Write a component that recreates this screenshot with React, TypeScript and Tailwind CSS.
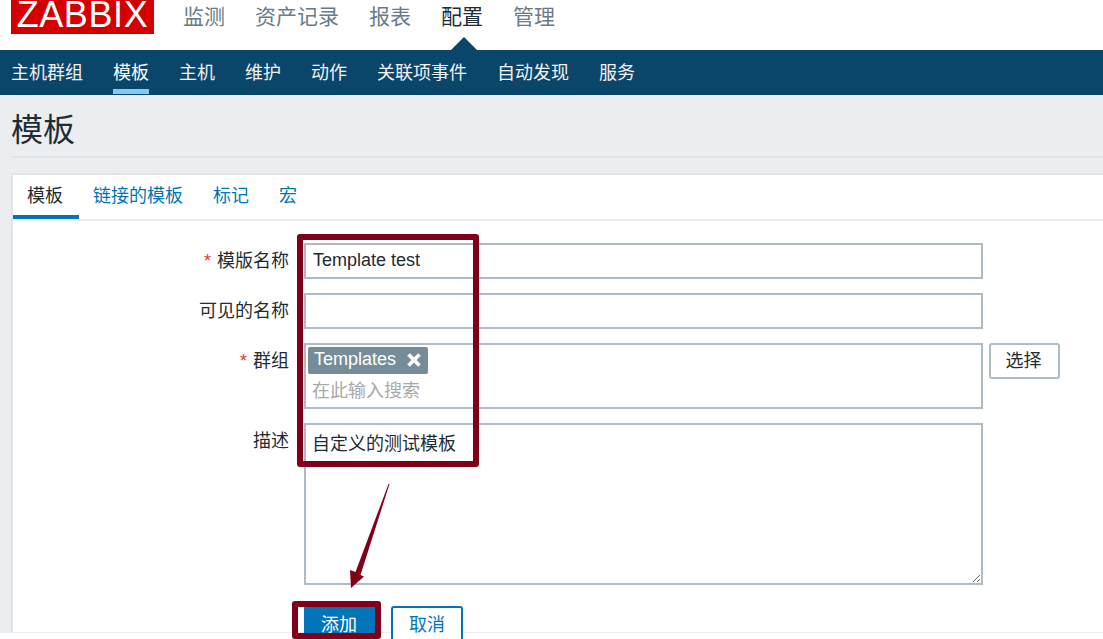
import React from 'react'

const FONT = "font-['Liberation_Sans','Noto_Sans_CJK_SC',sans-serif]"

const topMenu = ['监测', '资产记录', '报表', '配置', '管理']
const subMenu = ['主机群组', '模板', '主机', '维护', '动作', '关联项事件', '自动发现', '服务']
const tabs = ['模板', '链接的模板', '标记', '宏']

const Label: React.FC<{ text: string; required?: boolean }> = ({ text, required }) => (
    <div className="w-[276px] shrink-0 text-right text-[18px] leading-[24px] text-[#1f2c33] pt-[6px]">
        {required && <span className="text-[#e33734] mr-[6px]">*</span>}
        {text}
    </div>
)

const App: React.FC = () => {
    return (
        <div className={`${FONT} relative w-[1103px] h-[639px] overflow-hidden bg-white`}>
            {/* top bar */}
            <div className="h-[50px] flex items-start pl-[11px]">
                <div className="w-[143px] h-[34px] bg-[#d40000] flex justify-center items-center pb-[4px]">
                    <span className="text-white text-[36px] leading-[30px] tracking-[0.6px]">ZABBIX</span>
                </div>
                <div className="flex gap-[30px] ml-[29px] pt-[3px]">
                    {topMenu.map(item => (
                        <span key={item} className={`text-[21px] leading-[28px] ${item === '配置' ? 'text-[#1f2c33]' : 'text-[#687c87]'}`}>{item}</span>
                    ))}
                </div>
            </div>

            {/* sub nav */}
            <div className="relative h-[45px] bg-[#0a466a] flex gap-[30px] pl-[11px]">
                <div className="absolute left-[451px] top-[-13px] w-0 h-0 border-x-[13px] border-x-transparent border-b-[13px] border-b-[#0a466a]" />
                {subMenu.map(item => (
                    <div key={item} className={`h-[44px] pt-[11px] text-[18px] leading-[24px] ${item === '模板' ? 'text-white border-b-[5px] border-[#84c8f4]' : 'text-[#f2f2f2]'}`}>{item}</div>
                ))}
            </div>

            {/* page */}
            <div className="h-[538px] bg-[#ebeef0] pl-[11px]">
                <div className="h-[63px] border-b-2 border-[#e1e5e8] pt-[13px]">
                    <h1 className="text-[32px] leading-[44px] text-[#1f2c33]">模板</h1>
                </div>
                <div className="mt-[15px] h-[459px] bg-white border-l-2 border-t-2 border-[#e1e5e8]">
                    <div className="h-[46px] flex border-b-2 border-[#ebeef0] text-[18px] leading-[24px]">
                        {tabs.map((tab, i) => (
                            <div key={tab} className={`h-[44px] pl-[14px] pr-[16px] pt-[9px] ${i === 0 ? 'text-[#1f2c33] border-b-[4px] border-[#0275b8]' : 'text-[#0275b8]'}`}>{tab}</div>
                        ))}
                    </div>
                    <div className="pt-[22px]">
                        <div className="flex gap-[15px] mb-[14px]">
                            <Label text="模版名称" required />
                            <input readOnly value="Template test" className="w-[679px] h-[36px] border-2 border-[#acbbc4] px-[7px] pb-[2px] text-[18px] text-[#1f2c33] outline-none" />
                        </div>
                        <div className="flex gap-[15px] mb-[14px]">
                            <Label text="可见的名称" />
                            <input readOnly value="" className="w-[679px] h-[36px] border-2 border-[#acbbc4] px-[7px] text-[18px] outline-none" />
                        </div>
                        <div className="flex gap-[15px] mb-[14px]">
                            <Label text="群组" required />
                            <div className="w-[679px] h-[66px] border-2 border-[#acbbc4] pl-[2px] pt-[2px]">
                                <div className="w-[120px] h-[27px] rounded-[2px] bg-[#768d99] text-white text-[18px] leading-[25px] pl-[6px] pb-[2px] flex items-center gap-[10px]">
                                    <span>Templates</span>
                                    <svg width="16" height="16" viewBox="0 0 16 16"><path d="M2.5 2.5 L13.5 13.5 M13.5 2.5 L2.5 13.5" stroke="#fff" strokeWidth="3.8" /></svg>
                                </div>
                                <div className="text-[18px] leading-[28px] text-[#a9a9a9] pl-[4px] pt-[3px]">在此输入搜索</div>
                            </div>
                            <button className="-ml-[9px] w-[71px] h-[36px] bg-white border-2 border-[#acbbc4] rounded-[3px] text-[18px] text-[#1f2c33] pr-[2px] pt-[1px]">选择</button>
                        </div>
                        <div className="flex gap-[15px]">
                            <Label text="描述" />
                            <textarea readOnly value="自定义的测试模板" className="w-[679px] h-[162px] border-2 border-[#acbbc4] px-[6px] py-[3px] text-[18px] leading-[32px] text-[#1f2c33] outline-none" />
                        </div>
                        <div className="flex gap-[15px] mt-[21px] pl-[291px]">
                            <button className="w-[72px] h-[36px] bg-[#0275b8] text-white text-[18px] rounded-[2px] pt-[2px] pr-[2px]">添加</button>
                            <button className="w-[72px] h-[36px] bg-white border-2 border-[#0275b8] text-[#0275b8] text-[18px] rounded-[3px] pt-[2px]">取消</button>
                        </div>
                    </div>
                </div>
            </div>

            {/* annotations */}
            <div className="absolute left-[297px] top-[234px] w-[182px] h-[233px] border-[6px] border-[#80001a] rounded-[3px]" />
            <div className="absolute left-[292px] top-[601px] w-[89px] h-[38px] border-[6px] border-[#80001a] rounded-[3px]" />
            <svg className="absolute left-[345px] top-[480px]" width="50" height="112" viewBox="0 0 50 112">
                <path d="M44.5 4 L15.5 95 L19 96.5 L6 108 L5 90 L10.5 92 L43.5 4 Z" fill="#80001a" />
            </svg>
        </div>
    )
}

export default App
